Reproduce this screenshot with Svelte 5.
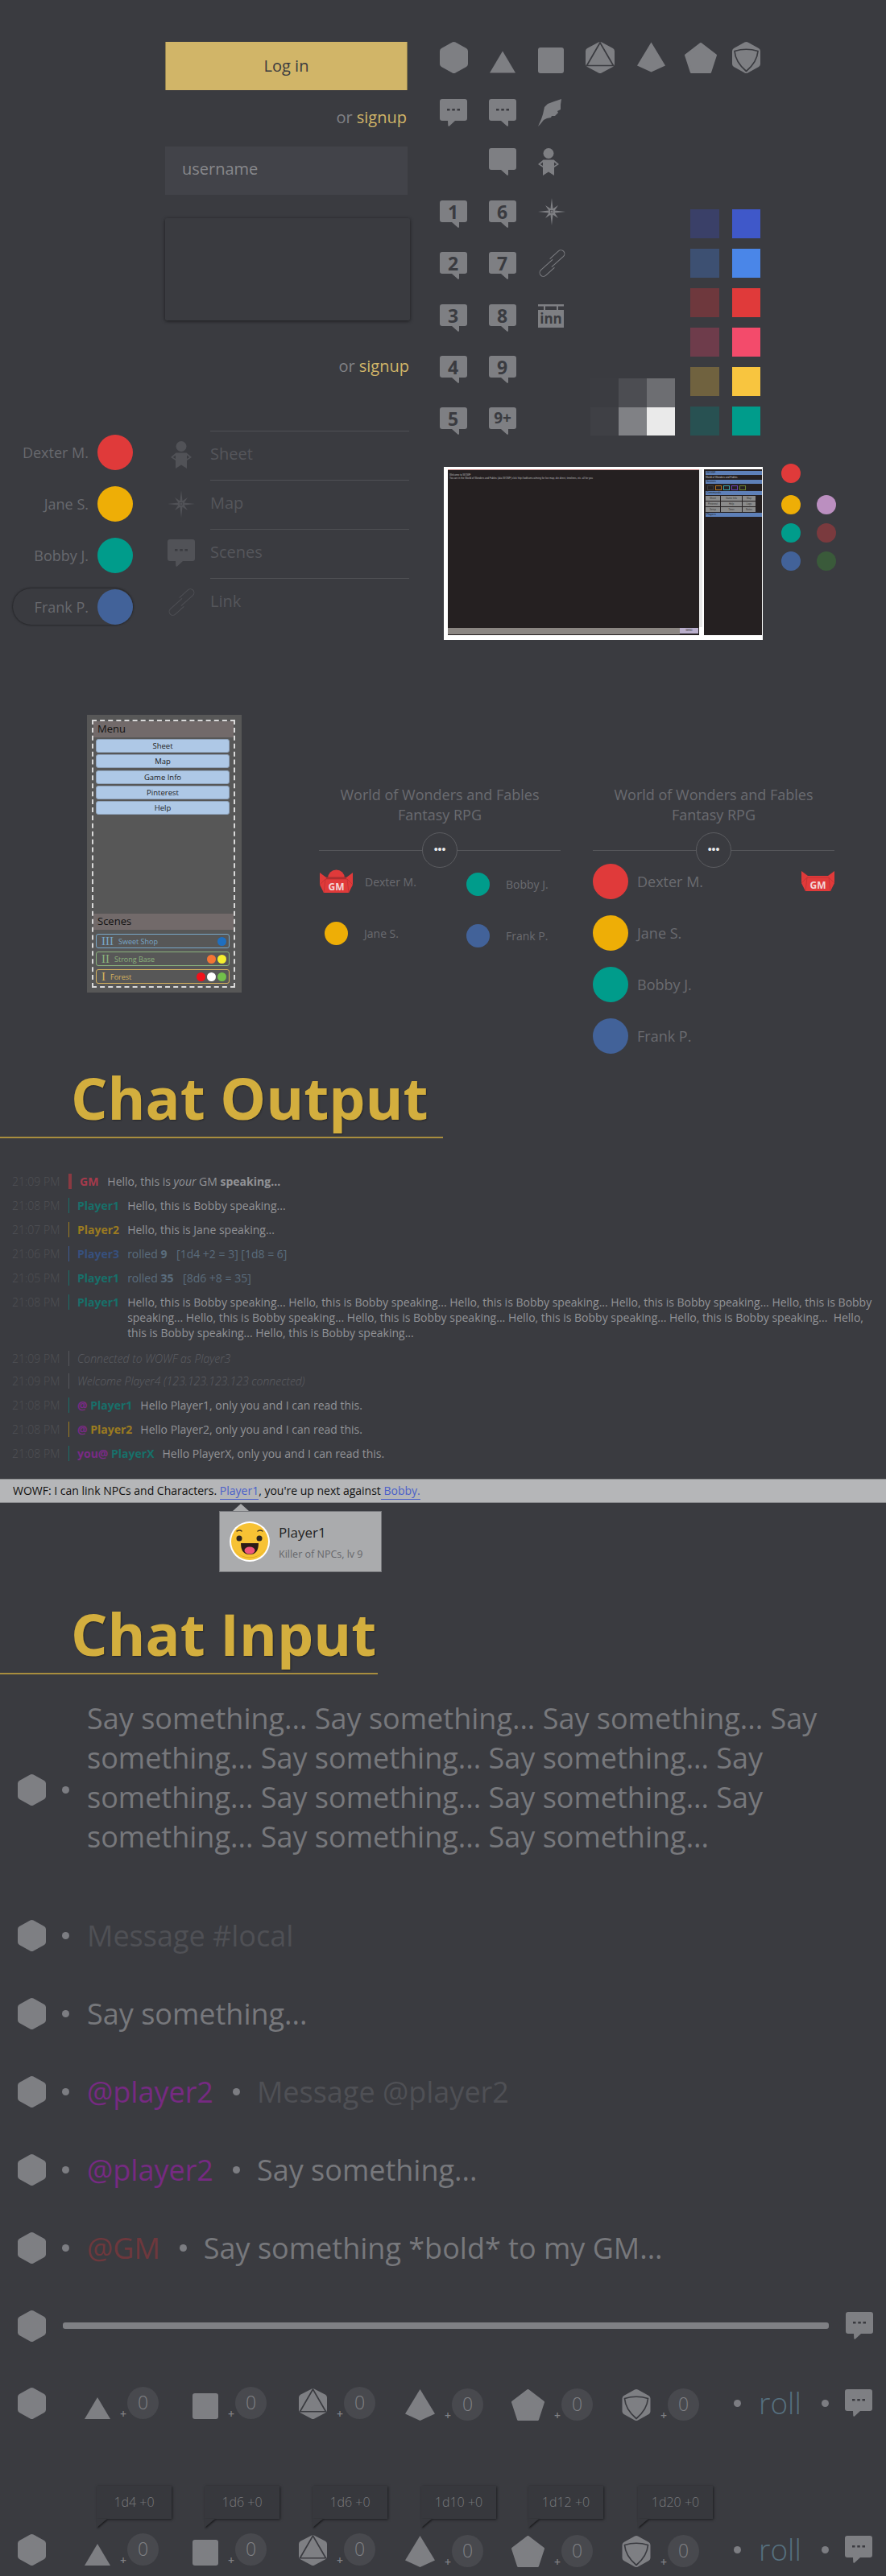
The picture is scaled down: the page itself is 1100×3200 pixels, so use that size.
<script>
  const numbers = [["1", "6"], ["2", "7"], ["3", "8"], ["4", "9"], ["5", "9+"]];

  const swatches = [
    ["#3a4068", "#3f58c9"],
    ["#3d5072", "#4a86e8"],
    ["#6e383d", "#e03a3a"],
    ["#6e3c4b", "#f34b6b"],
    ["#70623f", "#f8c53f"],
    ["#285152", "#009c8b"],
  ];
  const greys = ["#3b3c41", "#4c4d52", "#6d6e72", "#3f4045", "#808185", "#eaeaea"];

  const people = [
    { name: "Dexter M.", color: "#e03a3a" },
    { name: "Jane S.", color: "#eeae06" },
    { name: "Bobby J.", color: "#009c8b" },
    { name: "Frank P.", color: "#426299" },
  ];

  const sheetRows = [
    { label: "Sheet", icon: "person" },
    { label: "Map", icon: "star" },
    { label: "Scenes", icon: "bubble" },
    { label: "Link", icon: "link" },
  ];

  const menuButtons = ["Sheet", "Map", "Game Info", "Pinterest", "Help"];
  const scenes = [
    { num: "III", name: "Sweet Shop", color: "#78a6c6", dots: ["#1f6fc0"] },
    { num: "II", name: "Strong Base", color: "#8ab27c", dots: ["#f47534", "#f6f02e"] },
    { num: "I", name: "Forest", color: "#d8b35e", dots: ["#f2101a", "#ffffff", "#72c04a"] },
  ];

  const bobby = "Hello, this is Bobby speaking... ";
  const longText = bobby.repeat(9) + " " + bobby.repeat(2);
  const sayMany = "Say something... ".repeat(12);

  // gap = space up to the next die, tipGap = space up to the next tooltip
  const dice = [
    { kind: "d4", label: "1d4 +0", w: 32, h: 27, gap: 42, tipGap: 41 },
    { kind: "d6", label: "1d6 +0", w: 32, h: 32, gap: 40, tipGap: 41 },
    { kind: "d8", label: "1d6 +0", w: 35, h: 38, gap: 37, tipGap: 42 },
    { kind: "d10", label: "1d10 +0", w: 37, h: 39, gap: 35, tipGap: 40 },
    { kind: "d12", label: "1d12 +0", w: 41, h: 39, gap: 36, tipGap: 43 },
    { kind: "d20", label: "1d20 +0", w: 36, h: 39, gap: 0, tipGap: 0 },
  ];
</script>

{#snippet hex(w, h)}
  <svg class="ico" width={w} height={h} viewBox="0 0 35 39">
    <path d="M15.500 .6a4 4 0 0 1 4 0L33 8a4 4 0 0 1 2 3.400V27.600a4 4 0 0 1-2 3.400L19.500 38.400a4 4 0 0 1-4 0L2 31a4 4 0 0 1-2-3.400V11.400A4 4 0 0 1 2 8Z" />
  </svg>
{/snippet}

{#snippet d4(w, h)}
  <svg class="ico" width={w} height={h} viewBox="0 0 32 27">
    <path d="M16 0 32 27H0Z" />
  </svg>
{/snippet}

{#snippet d6(w, h)}
  <svg class="ico" width={w} height={h} viewBox="0 0 32 32">
    <rect width="32" height="32" rx="3" />
  </svg>
{/snippet}

{#snippet d8(w, h)}
  <svg class="ico" width={w} height={h} viewBox="0 0 36 39">
    <path d="M16 .6a4 4 0 0 1 4 0L34 8a4 4 0 0 1 2 3.400V27.600a4 4 0 0 1-2 3.400L20 38.400a4 4 0 0 1-4 0L2 31a4 4 0 0 1-2-3.400V11.400A4 4 0 0 1 2 8Z" />
    <path class="line" d="M18 1 1.500 29.500H34.500Z" />
  </svg>
{/snippet}

{#snippet d10(w, h)}
  <svg class="ico" width={w} height={h} viewBox="0 0 37 39">
    <path d="M18.500 0 37 30.500 18.500 39 0 30.500Z" />
  </svg>
{/snippet}

{#snippet d12(w, h)}
  <svg class="ico" width={w} height={h} viewBox="0 0 41 39">
    <path class="soft" d="M20.500 1.500 39.500 16 32.500 37.500H8.500L1.500 16Z" />
  </svg>
{/snippet}

{#snippet d20(w, h)}
  <svg class="ico" width={w} height={h} viewBox="0 0 35 39">
    <path d="M15.500 .6a4 4 0 0 1 4 0L33 8a4 4 0 0 1 2 3.400V27.600a4 4 0 0 1-2 3.400L19.500 38.400a4 4 0 0 1-4 0L2 31a4 4 0 0 1-2-3.400V11.400A4 4 0 0 1 2 8Z" />
    <path class="line" d="M3 11.500Q17.500 7 32 11.500Q31 25 17.500 36.500Q4 25 3 11.500Z" />
  </svg>
{/snippet}

{#snippet bubble(label, flip = false)}
  <div class="bub">
    <svg class="ico" width="34" height="34" viewBox="0 0 34 34">
      {#if flip}
        <path d="M3 0H31a3 3 0 0 1 3 3V24a3 3 0 0 1-3 3H19L12 33.500a1 1 0 0 1-1.700-.5L10 27H3a3 3 0 0 1-3-3V3a3 3 0 0 1 3-3Z" />
      {:else}
        <path d="M3 0H31a3 3 0 0 1 3 3V24a3 3 0 0 1-3 3H24V33a1 1 0 0 1-1.700 .6L15 27H3a3 3 0 0 1-3-3V3a3 3 0 0 1 3-3Z" />
      {/if}
      {#if label === "..."}
        <path class="cut" d="M9 12h3.500v2.500H9ZM15.300 12h3.500v2.500h-3.500ZM21.500 12H25v2.500h-3.500Z" />
      {/if}
    </svg>
    {#if label && label !== "..."}
      <span class="bubble-num" class:small={label === "9+"}>{label}</span>
    {/if}
  </div>
{/snippet}

{#snippet person()}
  <svg class="ico" width="26" height="34" viewBox="0 0 26 34">
    <circle cx="13" cy="6.500" r="6.500" />
    <path fill-rule="evenodd" d="M6.500 14.500H19.500L26 20 20 24V34L13 29.500 6 34V24L0 20ZM6 17.500 2.800 20 6 22ZM20 17.500V22L23.200 20Z" />
  </svg>
{/snippet}

{#snippet star()}
  <svg class="ico" width="34" height="34" viewBox="0 0 34 34">
    <path d="M17 0 18.530 13.300 25 9 20.700 15.470 34 17 20.700 18.530 25 25 18.530 20.700 17 34 15.470 20.700 9 25 13.300 18.530 0 17 13.300 15.470 9 9 15.470 13.300Z" />
    <rect class="hair" x="15.500" y="15.500" width="3" height="3" />
  </svg>
{/snippet}

{#snippet chain(cls = "")}
  <svg class="ico chain {cls}" width="35" height="34" viewBox="0 0 35 34">
    <g transform="rotate(-42 17.500 17)">
      <path d="M21 14H1.500a4.500 4.500 0 0 0 0 9H16" />
      <path d="M14 20H33.500a4.500 4.500 0 0 0 0-9H19" />
    </g>
  </svg>
{/snippet}

{#snippet feather()}
  <svg class="ico" width="30" height="34" viewBox="0 0 30 34">
    <path d="M29 0 20 3 12 6 8 10 6 19 4 25 0 34 3 31 7 26 11 24 16 23 17 21 21 21 25 17 24 15 28 13 28 7Z" />
  </svg>
{/snippet}

{#snippet inn()}
  <svg class="ico" width="32" height="29" viewBox="0 0 32 29">
    <path d="M0 0H32V2.500H0ZM7 2.500H9V7H7ZM23 2.500H25V7H23ZM0 7H32V29H0Z" />
    <text x="16" y="24" text-anchor="middle" class="inn-text">inn</text>
  </svg>
{/snippet}

{#snippet gm(withHead = false)}
  <svg class="gm" width="41" height={withHead ? 30 : 26} viewBox={withHead ? "0 0 41 30" : "0 4 41 26"}>
    {#if withHead}
      <path class="gm-red" d="M10 11a10.500 10.500 0 0 1 21 0Z" />
    {/if}
    <path class="gm-red" d="M0 4 8 10H33L41 4V19L36 29H5L0 19Z" />
    {#if withHead}
      <path class="gm-band" d="M8 9.500H33V12H8Z" />
    {/if}
    <path class="gm-line" d="M0 19 7 12H34L41 19M7 12 5 29M34 12 36 29" />
    <text x="20.500" y="25.500" text-anchor="middle" class="gm-text">GM</text>
  </svg>
{/snippet}

{#snippet dot()}
  <span class="dot"></span>
{/snippet}

{#snippet diceRow()}
  <div class="dice-row">
    {@render hex(35, 39)}
    <div class="die-list">
      {#each dice as die}
        <div class="die" style="margin-right: {die.gap}px">
          {#if die.kind === "d4"}{@render d4(die.w, die.h)}
          {:else if die.kind === "d6"}{@render d6(die.w, die.h)}
          {:else if die.kind === "d8"}{@render d8(die.w, die.h)}
          {:else if die.kind === "d10"}{@render d10(die.w, die.h)}
          {:else if die.kind === "d12"}{@render d12(die.w, die.h)}
          {:else}{@render d20(die.w, die.h)}{/if}
          <span class="plus">+</span>
          <span class="mod">0</span>
        </div>
      {/each}
    </div>
    <div class="roll">
      {@render dot()}
      <span class="roll-word">roll</span>
      {@render dot()}
    </div>
    {@render bubble("...", true)}
  </div>
{/snippet}

<main>
  <section class="top">
    <div class="top-left">
      <div class="form">
        <button class="login">Log in</button>
        <p class="signup">or <span>signup</span></p>
        <div class="username">username</div>
        <div class="blank"></div>
        <p class="signup signup-low">or <span>signup</span></p>
      </div>

      <div class="people-row">
        <ul class="people">
          {#each people as p, i}
            <li class:selected={i === 3}>
              <span>{p.name}</span>
              <i style="background: {p.color}"></i>
            </li>
          {/each}
        </ul>
        <ul class="sheet-links">
          {#each sheetRows as row}
            <li>
              <div class="sheet-icon" class:dim={row.icon !== "link"}>
                {#if row.icon === "person"}{@render person()}
                {:else if row.icon === "star"}{@render star()}
                {:else if row.icon === "bubble"}{@render bubble("...", true)}
                {:else}{@render chain("faint")}{/if}
              </div>
              <span>{row.label}</span>
            </li>
          {/each}
        </ul>
      </div>
    </div>

    <div class="top-right">
      <div class="dice-icons">
        {@render hex(35, 39)}
        {@render d4(32, 28)}
        {@render d6(32, 32)}
        {@render d8(36, 39)}
        {@render d10(35, 40)}
        {@render d12(40, 38)}
        {@render d20(35, 39)}
      </div>

      <div class="icon-area">
        <div class="icon-grid">
          {@render bubble("...", true)}
          {@render bubble("...")}
          {@render feather()}

          <span></span>
          {@render bubble("")}
          {@render person()}

          {@render bubble(numbers[0][0])}
          {@render bubble(numbers[0][1])}
          <div class="up">{@render star()}</div>

          {@render bubble(numbers[1][0])}
          {@render bubble(numbers[1][1])}
          <div class="up">{@render chain()}</div>

          {@render bubble(numbers[2][0])}
          {@render bubble(numbers[2][1])}
          {@render inn()}

          {@render bubble(numbers[3][0])}
          {@render bubble(numbers[3][1])}
          <span></span>

          {@render bubble(numbers[4][0])}
          {@render bubble(numbers[4][1])}
          <span></span>
        </div>

        <div class="greys">
          {#each greys as g}
            <i style="background: {g}"></i>
          {/each}
        </div>

        <div class="swatches">
          {#each swatches as row}
            {#each row as c}
              <i style="background: {c}"></i>
            {/each}
          {/each}
        </div>
      </div>

      <div class="shot-row">
        <div class="shot">
          <div class="shot-main">
            <p class="shot-log">Welcome to WOWF</p>
            <p class="shot-log long">You are in the World of Wonders and Fables (aka WOWF) click http://wdfcom.co/ming for live map, die direct, timelines, etc. all for you</p>
            <div class="shot-bar"><span>SEND</span></div>
          </div>
          <div class="shot-scroll"></div>
          <div class="shot-side">
            <b>WOWF</b>
            <small>World of Wonders and Fables</small>
            <b>Scenes</b>
            <div class="shot-tabs"><em></em><em class="t2"></em><em class="t3"></em><em class="t4"></em><em class="t5"></em></div>
            <b>Commands</b>
            <div class="shot-cmds">
              <em>Sheet</em><em>Game Info</em><em>Map</em>
              <em>Pinterest</em><em>Help</em><em>Logs</em>
              <em>Setup</em><em>Timer</em><em>Notes</em>
            </div>
            <b>Players</b>
          </div>
        </div>
        <div class="dots-a">
          <i style="background: #e03a3a"></i>
          <i style="background: #eeae06"></i>
          <i style="background: #009c8b"></i>
          <i style="background: #426299"></i>
        </div>
        <div class="dots-b">
          <i style="background: #bb8fc0"></i>
          <i style="background: #7a3a3e"></i>
          <i style="background: #3a5a3a"></i>
        </div>
      </div>
    </div>
  </section>

  <section class="second">
    <div class="panel">
      <div class="panel-inner">
        <h4>Menu</h4>
        <div class="panel-buttons">
          {#each menuButtons as b}
            <div class="panel-btn">{b}</div>
          {/each}
        </div>
        <h4>Scenes</h4>
        <div class="panel-scenes">
          {#each scenes as s}
            <div class="scene" style="color: {s.color}; border-color: {s.color}">
              <b>{s.num}</b>
              <span>{s.name}</span>
              <div class="scene-dots">
                {#each s.dots as d}
                  <i style="background: {d}"></i>
                {/each}
              </div>
            </div>
          {/each}
        </div>
      </div>
    </div>

    <div class="game">
      <h3>World of Wonders and Fables<br />Fantasy RPG</h3>
      <div class="divider"><span>•••</span></div>
      <div class="small-people">
        <div class="sp-col">
          <div class="sp first">{@render gm(true)}<span>Dexter M.</span></div>
          <div class="sp"><i style="background: #eeae06"></i><span>Jane S.</span></div>
        </div>
        <div class="sp-col right">
          <div class="sp"><i style="background: #009c8b"></i><span>Bobby J.</span></div>
          <div class="sp"><i style="background: #426299"></i><span>Frank P.</span></div>
        </div>
      </div>
    </div>

    <div class="game">
      <h3>World of Wonders and Fables<br />Fantasy RPG</h3>
      <div class="divider"><span>•••</span></div>
      <ul class="big-people">
        {#each people as p, i}
          <li>
            <i style="background: {p.color}"></i>
            <span>{p.name}</span>
            {#if i === 0}
              <div class="gm-right">{@render gm()}</div>
            {/if}
          </li>
        {/each}
      </ul>
    </div>
  </section>

  <h1 class="title-output">Chat Output</h1>

  <div class="chat">
    <div class="msg"><time>21:09 PM</time><u class="bar thick" style="background: #8a3a42"></u><b class="gm-name" style="color: #a63a4c">GM</b><p>Hello, this is <em>your</em> GM <strong>speaking...</strong></p></div>
    <div class="msg"><time>21:08 PM</time><u class="bar" style="background: #1b6f68"></u><b style="color: #17706a">Player1</b><p>Hello, this is Bobby speaking...</p></div>
    <div class="msg"><time>21:07 PM</time><u class="bar" style="background: #9c7b20"></u><b style="color: #9c7b20">Player2</b><p>Hello, this is Jane speaking...</p></div>
    <div class="msg"><time>21:06 PM</time><u class="bar" style="background: #3d5a92"></u><b style="color: #37507e">Player3</b><p class="rolled">rolled <strong>9</strong> <span>[1d4 +2 = 3] [1d8 = 6]</span></p></div>
    <div class="msg"><time>21:05 PM</time><u class="bar" style="background: #1b6f68"></u><b style="color: #17706a">Player1</b><p class="rolled">rolled <strong>35</strong> <span>[8d6 +8 = 35]</span></p></div>
    <div class="msg tall"><time>21:08 PM</time><u class="bar" style="background: #1b6f68"></u><b style="color: #17706a">Player1</b><p class="wrap">{longText}</p></div>
    <div class="msg sys"><time>21:09 PM</time><u class="bar" style="background: #56575b"></u><p>Connected to WOWF as Player3</p></div>
    <div class="msg sys last"><time>21:09 PM</time><u class="bar" style="background: #56575b"></u><p>Welcome Player4 (123.123.123.123 connected)</p></div>
    <div class="msg"><time>21:08 PM</time><u class="bar" style="background: #1b6f68"></u><b><span class="at">@</span> <span style="color: #17706a">Player1</span></b><p>Hello Player1, only you and I can read this.</p></div>
    <div class="msg"><time>21:08 PM</time><u class="bar" style="background: #9c7b20"></u><b><span class="at">@</span> <span style="color: #9c7b20">Player2</span></b><p>Hello Player2, only you and I can read this.</p></div>
    <div class="msg"><time>21:08 PM</time><u class="bar" style="background: #1b6f68"></u><b><span class="at">you@</span> <span style="color: #17706a">PlayerX</span></b><p>Hello PlayerX, only you and I can read this.</p></div>
  </div>

  <div class="banner">
    WOWF: I can link NPCs and Characters. <a href="#p1">Player1</a>, you're up next against<a href="#b">&nbsp;Bobby.</a>
    <div class="popup">
      <svg class="face" width="50" height="50" viewBox="0 0 50 50">
        <circle cx="25" cy="25" r="25" fill="#fff" />
        <circle cx="25" cy="25" r="23" fill="#f7c234" />
        <path d="M3 29a23 23 0 0 0 44 0a23 22 0 0 1-44 0Z" fill="#d9a21e" />
        <path d="M9 12q4-2 6 0M35 12q3-2 6 0" fill="none" stroke="#4a3a20" stroke-width="1.500" stroke-linecap="round" />
        <circle cx="12" cy="21" r="3.500" fill="#2c2420" />
        <circle cx="37" cy="21" r="3.500" fill="#2c2420" />
        <path d="M14 27H36Q36 41 25 41T14 27Z" fill="#2c1c18" />
        <ellipse cx="25" cy="36" rx="6.500" ry="4.500" fill="#f0557a" />
      </svg>
      <div class="pop-text">
        <div class="pop-name">Player1</div>
        <div class="pop-sub">Killer of NPCs, lv 9</div>
      </div>
    </div>
  </div>

  <h1 class="title-input">Chat Input</h1>

  <div class="inputs">
    <div class="input-row long">
      {@render hex(35, 39)}{@render dot()}
      <div class="say">{sayMany}</div>
    </div>
    <div class="input-row">
      {@render hex(35, 39)}{@render dot()}
      <span class="say ph">Message #local</span>
    </div>
    <div class="input-row">
      {@render hex(35, 39)}{@render dot()}
      <span class="say">Say something...</span>
    </div>
    <div class="input-row">
      {@render hex(35, 39)}{@render dot()}
      <span class="say at-big">@player2</span>{@render dot()}<span class="say ph">Message @player2</span>
    </div>
    <div class="input-row">
      {@render hex(35, 39)}{@render dot()}
      <span class="say at-big">@player2</span>{@render dot()}<span class="say">Say something...</span>
    </div>
    <div class="input-row">
      {@render hex(35, 39)}{@render dot()}
      <span class="say at-gm">@GM</span>{@render dot()}<span class="say">Say something *bold* to my GM...</span>
    </div>
    <div class="slider-row">
      {@render hex(35, 39)}
      <div class="slider"></div>
      {@render bubble("...", true)}
    </div>
    {@render diceRow()}
    <div class="tips">
      {#each dice as die}
        <div class="tip" style="margin-right: {die.tipGap}px">{die.label}</div>
      {/each}
    </div>
    {@render diceRow()}
  </div>
</main>

<style>
  :global(body) {
    margin: 0;
    background: #3a3b40;
    font-family: "Open Sans", "Liberation Sans", sans-serif;
  }
  main {
    width: 1100px;
    height: 3200px;
    overflow: hidden;
    color: #808185;
  }
  h1, h3, h4, p, ul {
    margin: 0;
    padding: 0;
    font-weight: normal;
  }
  ul {
    list-style: none;
  }
  i {
    display: block;
  }
  .ico {
    display: block;
    flex: none;
    fill: #7e7f83;
  }
  .cut {
    fill: #3a3b40;
  }
  .line {
    fill: none;
    stroke: #3a3b40;
    stroke-width: 1.700;
  }
  .soft {
    stroke: #7e7f83;
    stroke-width: 3;
    stroke-linejoin: round;
  }
  .hair {
    fill: none;
    stroke: #3a3b40;
    stroke-width: .5;
  }
  .chain {
    fill: none;
  }
  .chain path {
    fill: none;
    stroke: #7e7f83;
    stroke-width: 1;
  }
  .chain.faint path {
    stroke: #4e4f54;
  }
  .bub {
    position: relative;
    width: 34px;
    height: 34px;
    flex: none;
  }
  .bubble-num {
    position: absolute;
    left: 0;
    top: 0;
    width: 33px;
    height: 28px;
    line-height: 28px;
    text-align: center;
    font-size: 23px;
    font-weight: 700;
    color: #3a3b40;
  }
  .bubble-num.small {
    font-size: 19px;
    top: -1px;
    width: 34px;
  }
  .inn-text {
    font: 700 17px "Open Sans", sans-serif;
    fill: #3a3b40;
  }

  /* top area */
  .top {
    display: flex;
    height: 838px;
    padding-top: 51px;
    box-sizing: border-box;
  }
  .top-left {
    width: 546px;
  }
  .form {
    margin-left: 205px;
    width: 304px;
    padding-top: 1px;
  }
  .login {
    display: block;
    width: 301px;
    height: 60px;
    border: 0;
    border-left: 1px solid #8f7f4d;
    border-right: 1px solid #8f7f4d;
    background: #d1b568;
    color: #3a3b40;
    font: 20px "Open Sans", sans-serif;
    padding: 0 0 2px;
  }
  .signup {
    font-size: 20px;
    line-height: 24px;
    margin-top: 22px;
    width: 300px;
    text-align: right;
    color: #808185;
  }
  .signup span {
    color: #d1b568;
  }
  .username {
    margin-top: 24px;
    width: 301px;
    height: 60px;
    box-sizing: border-box;
    padding: 16px 0 0 21px;
    background: #424349;
    color: #87888c;
    font-size: 20px;
    line-height: 24px;
  }
  .blank {
    margin-top: 29px;
    width: 304px;
    height: 127px;
    border-radius: 2px;
    box-shadow: 0 1px 4px rgba(0, 0, 0, .55);
  }
  .signup-low {
    margin-top: 45px;
    width: 303px;
  }
  .people-row {
    display: flex;
    margin-top: 68px;
  }
  .people {
    width: 205px;
    padding-top: 4px;
    margin-left: 16px;
    box-sizing: border-box;
  }
  .people li {
    display: flex;
    justify-content: flex-end;
    align-items: center;
    gap: 11px;
    width: 149px;
    height: 45px;
    margin-bottom: 19px;
    font-size: 18px;
    color: #68696e;
  }
  .people li i {
    width: 44px;
    height: 44px;
    border-radius: 50%;
  }
  .people li.selected {
    background: #3a3b40;
    border-radius: 23px;
    box-shadow: 0 0 3px rgba(0, 0, 0, .7);
  }
  .sheet-links {
    width: 304px;
    margin-left: -16px;
  }
  .sheet-links li {
    display: flex;
    align-items: center;
    height: 61px;
    font-size: 20px;
    color: #55565b;
  }
  .sheet-links span {
    display: block;
    width: 247px;
    height: 60px;
    line-height: 56px;
    margin-left: 16px;
    border-top: 1px solid #505155;
  }
  .sheet-icon {
    width: 40px;
    padding-bottom: 2px;
    display: flex;
    justify-content: center;
  }
  .sheet-icon.dim :global(.ico) {
    fill: #515257;
  }

  .top-right {
    width: 554px;
  }
  .dice-icons {
    display: grid;
    grid-template-columns: 62px 60px 59px 64px 59px 59px 35px;
    align-items: end;
    height: 40px;
  }
  .icon-area {
    display: flex;
    margin-top: 32px;
  }
  .icon-grid {
    display: grid;
    grid-template-columns: 61px 61px 65px;
    grid-template-rows: 61px 65px 64px 65px 64px 64px 35px;
    width: 187px;
    justify-items: start;
  }
  .up {
    margin-top: -3px;
  }
  .greys {
    display: grid;
    grid-template-columns: repeat(3, 35px);
    grid-auto-rows: 35.500px;
    align-self: flex-end;
  }
  .swatches {
    display: grid;
    grid-template-columns: 36px 35px;
    column-gap: 16px;
    grid-auto-rows: 36px;
    row-gap: 13px;
    margin-left: 19px;
    align-self: flex-end;
  }
  .shot-row {
    display: flex;
    margin-top: 39px;
    margin-left: 5px;
  }
  .shot {
    display: flex;
    width: 396px;
    height: 215px;
    box-sizing: border-box;
    background: #fff;
    padding: 3px 1px 6px 5px;
  }
  .shot-main {
    width: 312px;
    background: #252021;
    border-top: 1px solid #c98a8a;
    font: 3px "Liberation Sans", sans-serif;
    color: #bbb;
    display: flex;
    flex-direction: column;
  }
  .shot-log {
    padding: 5px 0 0 2px;
    line-height: 3px;
    white-space: nowrap;
    overflow: hidden;
  }
  .shot-log.long {
    padding-top: 1px;
    width: 230px;
  }
  .shot-bar {
    margin-top: auto;
    height: 8px;
    background: #8b8682;
    margin-bottom: 1px;
    border-right: 24px solid #252021;
    position: relative;
  }
  .shot-bar span {
    position: absolute;
    right: -23px;
    width: 23px;
    height: 7px;
    line-height: 7px;
    background: #b9aecb;
    text-align: center;
    color: #333;
  }
  .shot-scroll {
    width: 4px;
    background: #e8e8e8;
    height: 196px;
    border-right: 1px solid #fff;
  }
  .shot-side {
    flex: 1;
    background: #252021;
    margin-left: 1px;
    font: 3.500px "Liberation Sans", sans-serif;
    color: #ccc;
    display: flex;
    flex-direction: column;
    gap: 1px;
    padding: 2px 0 0 2px;
    overflow: hidden;
  }
  .shot-side b {
    display: block;
    background: #5e80b8;
    color: #202020;
    height: 5px;
    line-height: 5px;
    font-weight: 400;
    padding-left: 1px;
  }
  .shot-side small {
    font-size: 3px;
    height: 4px;
    line-height: 4px;
  }
  .shot-tabs {
    display: flex;
    gap: 2px;
    height: 7px;
    align-items: center;
    padding: 0 2px;
  }
  .shot-tabs em {
    width: 8px;
    height: 6px;
    border: 1px solid #3a3a3a;
    box-sizing: border-box;
  }
  .shot-tabs .t2 { border-color: #b07020; }
  .shot-tabs .t3 { border-color: #3aa0a8; }
  .shot-tabs .t4 { border-color: #6a40b0; }
  .shot-tabs .t5 { border-color: #6a8030; }
  .shot-cmds {
    display: grid;
    grid-template-columns: 18px 26px 16px;
    gap: 1px;
  }
  .shot-cmds em {
    background: #8a8a8a;
    color: #333;
    font-style: normal;
    height: 6px;
    line-height: 6px;
    font-size: 3px;
    text-align: center;
  }
  .dots-a, .dots-b {
    display: flex;
    flex-direction: column;
  }
  .dots-a i, .dots-b i {
    width: 24px;
    height: 24px;
    border-radius: 50%;
    margin-bottom: 11px;
  }
  .dots-a {
    margin-left: 23px;
    margin-top: -4px;
  }
  .dots-a i:first-child {
    margin-bottom: 15px;
  }
  .dots-b {
    margin-left: 20px;
    margin-top: 35px;
  }

  /* second band */
  .second {
    display: flex;
    height: 475px;
    padding: 50px 0 0 108px;
    box-sizing: border-box;
  }
  .panel {
    width: 192px;
    height: 345px;
    background: #575757;
    padding: 6px;
    box-sizing: border-box;
  }
  .panel-inner {
    width: 178px;
    height: 333px;
    box-sizing: border-box;
    border: 2px dashed #d9d9d9;
    display: flex;
    flex-direction: column;
  }
  .panel h4 {
    height: 20px;
    line-height: 19px;
    background: #726a6a;
    padding-left: 5px;
    font-size: 13px;
    color: #111;
  }
  .panel-buttons {
    padding: 2px 5px 0 3px;
    flex: 1;
    display: flex;
    flex-direction: column;
    gap: 2.300px;
  }
  .panel-btn {
    height: 17px;
    box-sizing: border-box;
    line-height: 15px;
    background: #aec8e6;
    border: 1px solid #8fa3bb;
    border-radius: 3px;
    text-align: center;
    font-size: 9.500px;
    color: #222;
  }
  .panel-scenes {
    padding: 5px 5px 3px 3px;
    display: flex;
    flex-direction: column;
    gap: 4px;
  }
  .scene {
    display: flex;
    align-items: center;
    height: 18px;
    box-sizing: border-box;
    border: 1px solid;
    border-radius: 3px;
    padding: 0 3px 0 6px;
    font-size: 9px;
  }
  .scene b {
    font: 15px/16px "Liberation Serif", serif;
    margin-right: 6px;
  }
  .scene-dots {
    margin-left: auto;
    display: flex;
    gap: 2px;
  }
  .scene-dots i {
    width: 11px;
    height: 11px;
    border-radius: 50%;
  }

  .game {
    width: 300px;
    margin-left: 40px;
  }
  .panel + .game {
    margin-left: 96px;
  }
  .game h3 {
    padding-top: 87px;
    text-align: center;
    font-size: 18px;
    line-height: 25px;
    color: #6a6b70;
  }
  .divider {
    height: 45px;
    margin-top: 9px;
    background: linear-gradient(#55565a, #55565a) center / 100% 1px no-repeat;
    display: flex;
    justify-content: center;
  }
  .divider span {
    width: 44px;
    height: 44px;
    box-sizing: border-box;
    border: 1px solid #5c5d61;
    border-radius: 50%;
    background: #3a3b40;
    color: #e8e8e8;
    font: 14px/41px "Liberation Sans", sans-serif;
    text-align: center;
  }
  .small-people {
    display: flex;
  }
  .sp-col {
    width: 183px;
  }
  .sp-col.right {
    width: 117px;
  }
  .sp {
    display: flex;
    align-items: center;
    height: 30px;
    margin-top: 34px;
    font-size: 14px;
    color: #6a6b70;
  }
  .sp-col .sp:first-child {
    margin-top: 1px;
  }
  .sp-col.right .sp:first-child {
    margin-top: 4px;
  }
  .sp-col:first-child .sp i {
    margin-left: 7px;
  }
  .sp i {
    width: 29px;
    height: 29px;
    border-radius: 50%;
    margin-right: 20px;
  }
  .sp.first :global(.gm) {
    margin: 0 15px 0 1px;
  }
  .big-people {
    margin-top: -6px;
  }
  .big-people li {
    display: flex;
    align-items: center;
    height: 44px;
    margin-bottom: 20px;
    font-size: 18px;
    color: #6a6b70;
  }
  .big-people i {
    width: 44px;
    height: 44px;
    border-radius: 50%;
    margin-right: 11px;
  }
  .gm-right {
    margin-left: auto;
  }
  .gm {
    display: block;
    flex: none;
  }
  .gm-red {
    fill: #e03a3a;
  }
  .gm-band {
    fill: #a92e30;
  }
  .gm-line {
    fill: none;
    stroke: #b92f30;
    stroke-width: .7;
  }
  .gm-text {
    font: 700 12px "Open Sans", sans-serif;
    fill: #f3d6d6;
  }

  /* headings */
  h1 {
    font-weight: 700;
    font-size: 71.500px;
    color: #d3ae3e;
    box-sizing: border-box;
    padding-left: 88px;
    border-bottom: 2px solid #a88d3e;
    text-shadow: 1px 1px 2px rgba(0, 0, 0, .35);
    white-space: nowrap;
    height: 101px;
    line-height: 102px;
  }
  .title-output {
    width: 550px;
  }
  .title-input {
    width: 469px;
    margin-top: 112px;
  }

  /* chat log */
  .chat {
    padding-top: 44px;
    font-size: 14px;
    line-height: 19px;
  }
  .msg {
    display: flex;
    align-items: flex-start;
    min-height: 19px;
    margin-bottom: 11px;
  }
  .msg time {
    width: 85px;
    padding-left: 15px;
    box-sizing: border-box;
    color: #505155;
    font-weight: 300;
    white-space: nowrap;
  }
  .bar {
    display: block;
    flex: none;
    width: 1px;
    height: 19px;
    margin-right: 10px;
  }
  .bar.thick {
    width: 4px;
  }
  .msg b {
    font-weight: 700;
    margin-right: 10px;
    white-space: nowrap;
  }
  .msg .gm-name {
    margin-right: 11px;
  }
  .msg p {
    color: #929397;
  }
  .msg p.rolled {
    color: #5a6d7d;
  }
  .rolled span {
    margin-left: 8px;
  }
  .wrap {
    width: 935px;
    white-space: pre-wrap;
  }
  .msg.tall {
    margin-bottom: 13px;
  }
  .msg.sys {
    margin-bottom: 9px;
  }
  .msg.sys.last {
    margin-bottom: 11px;
  }
  .msg.sys p {
    color: #5e5f64;
    font-style: italic;
    font-weight: 300;
  }
  .at {
    color: #7a2a86;
  }

  /* banner + popup */
  .banner {
    position: relative;
    margin-top: 22px;
    height: 30px;
    box-sizing: border-box;
    padding-left: 16px;
    background: #b5b6b8;
    border-top: 1px solid #8a8b8e;
    border-bottom: 1px solid #8a8b8e;
    color: #111;
    font-size: 14px;
    line-height: 28px;
    white-space: nowrap;
  }
  .banner a {
    color: #4a5fc9;
    text-decoration: none;
    border-bottom: 1px solid #4a5fc9;
    padding: 0 0 1px;
  }
  .popup {
    position: absolute;
    left: 272px;
    top: 39px;
    width: 202px;
    height: 76px;
    box-sizing: border-box;
    background: #aaabad;
    border: 1px solid #77787c;
    display: flex;
    align-items: center;
    padding-left: 12px;
    gap: 11px;
  }
  .popup::before {
    content: "";
    position: absolute;
    left: 16px;
    top: -10px;
    border-left: 10px solid transparent;
    border-right: 10px solid transparent;
    border-bottom: 9px solid #aaabad;
  }
  .pop-text {
    margin-top: 2px;
  }
  .pop-name {
    font-size: 17px;
    line-height: 22px;
    color: #222;
  }
  .pop-sub {
    margin-top: 8px;
    font-size: 12.500px;
    line-height: 16px;
    color: #66676b;
  }

  /* inputs */
  .inputs {
    padding: 0 16px 0 22px;
  }
  .dot {
    flex: none;
    display: block;
    width: 9px;
    height: 9px;
    border-radius: 50%;
    background: #7c7d82;
  }
  .input-row {
    display: flex;
    align-items: center;
    height: 50px;
    margin-bottom: 47px;
  }
  .input-row > :global(.dot) {
    margin-left: 20px;
    margin-right: 22px;
  }
  .input-row .say ~ .dot {
    margin-left: 24px;
    margin-right: 21px;
  }
  .input-row.long {
    height: 196px;
    margin-top: 30px;
    margin-bottom: 73px;
  }
  .input-row.long > :global(.ico),
  .input-row.long > :global(.dot) {
    margin-top: 30px;
  }
  .say {
    font-size: 36px;
    line-height: 49px;
    color: #77787c;
    white-space: nowrap;
  }
  .input-row.long .say {
    white-space: normal;
    width: 925px;
    flex: none;
  }
  .say.ph {
    color: #4f5055;
  }
  .at-big {
    color: #762a82;
  }
  .at-gm {
    color: #6e383d;
  }
  .slider-row {
    display: flex;
    align-items: center;
    height: 40px;
    margin-top: 52px;
  }
  .slider {
    margin: 0 21px;
    width: 951px;
    height: 8px;
    border-radius: 3px;
    background: #7f8084;
  }
  .dice-row {
    display: flex;
    align-items: center;
    height: 40px;
    margin-top: 56px;
  }
  .die-list {
    display: flex;
    align-items: flex-start;
    height: 40px;
    margin-left: 48px;
  }
  .die {
    display: flex;
    align-items: flex-end;
    height: 40px;
  }
  .die:nth-child(n + 4) {
    margin-top: 2px;
  }
  .plus {
    font-size: 14px;
    font-weight: 600;
    line-height: 14px;
    width: 21px;
    box-sizing: border-box;
    padding-right: 1px;
    text-align: right;
    margin-bottom: -1px;
  }
  .mod {
    width: 39px;
    height: 40px;
    line-height: 39px;
    border-radius: 50%;
    background: #48494e;
    text-align: center;
    font-size: 23px;
    font-weight: 300;
    color: #808185;
    flex: none;
  }
  .roll {
    display: flex;
    align-items: center;
    margin-left: 43px;
    margin-right: 20px;
  }
  .roll-word {
    color: #56707f;
    font-size: 37px;
    font-weight: 300;
    margin: 0 25px 0 22px;
    line-height: 40px;
  }
  .tips {
    display: flex;
    margin: 83px 0 0 98px;
    height: 41px;
  }
  .tip {
    position: relative;
    flex: none;
    width: 93px;
    height: 41px;
    line-height: 41px;
    text-align: center;
    background: #37383d;
    box-shadow: 1px 1px 3px rgba(0, 0, 0, .5);
    font-size: 16px;
    font-weight: 300;
    color: #77787c;
  }
  .tip::after {
    content: "";
    position: absolute;
    left: 0;
    top: 41px;
    border-right: 13px solid transparent;
    border-top: 11px solid #37383d;
    filter: drop-shadow(1px 1px 1px rgba(0, 0, 0, .6));
  }
  .tips + .dice-row {
    margin-top: 18px;
  }
</style>
